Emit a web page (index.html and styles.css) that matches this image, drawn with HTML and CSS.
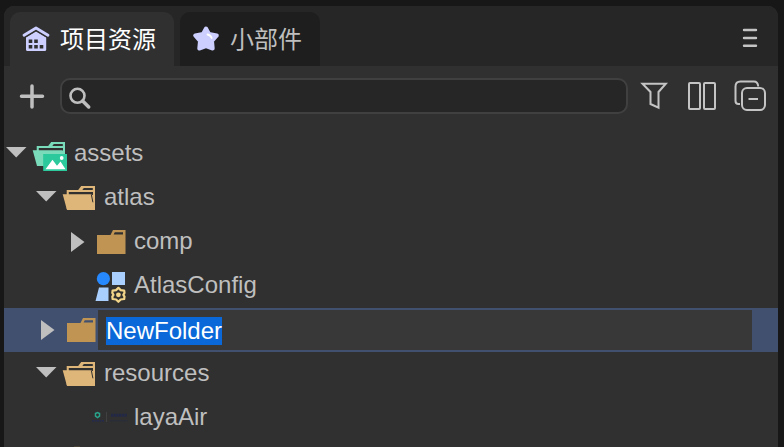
FILE: index.html
```html
<!DOCTYPE html>
<html lang="zh-CN">
<head>
<meta charset="utf-8">
<title>项目资源</title>
<link rel="stylesheet" href="styles.css">
</head>
<body>
<svg class="defs" width="0" height="0">
  <symbol id="arrow-open" viewBox="0 0 26 44"><path d="M2 15h20.500L12.200 25.500z" fill="#bfbfbf"/></symbol>
  <symbol id="arrow-closed" viewBox="0 0 26 44"><path d="M7 12l13.500 10L7 32z" fill="#bfbfbf"/></symbol>
  <symbol id="folder-closed" viewBox="0 0 44 44"><path fill="#c09553" fill-rule="evenodd" d="M7 15h13.500l2.500-5h12.500v24H7zM24.800 12.300l-1.200 2.300h9.400v-2.300z"/></symbol>
  <symbol id="folder-open" viewBox="0 0 44 44">
    <path fill="#dfb67a" fill-rule="evenodd" d="M6.700 14h11.500l3-4H35v23H6.700zM23.800 12l-1.500 2h10.500V12zM8.800 16v3h24.200v-3z"/>
    <path fill="#dfb67a" d="M2.700 18.300h29.300L35 30v4H7z"/>
    <path fill="none" stroke="#303030" stroke-width="1" d="M31.300 18.300l1.600 8"/>
  </symbol>
</svg>
<main class="panel">
  <nav class="tabs">
    <div class="tab tab-active">
      <svg class="tab-icon" viewBox="0 0 30 30">
        <path d="M3 12.300L15 5l12 7.300" fill="none" stroke="#cccfff" stroke-width="2.800" stroke-linecap="round" stroke-linejoin="round"/>
        <path d="M5 14.500l10-6 10.200 6V26.500q0 1.500-1.500 1.500H6.500Q5 28 5 26.500z" fill="#cccfff"/>
        <path d="M4.500 14.100L15 7.700l10.500 6.400" fill="none" stroke="#303030" stroke-width=".8"/>
        <path d="M7.700 16.500h3.600v3.500h-3.600zM13.200 16.500h3.600v3.500h-3.600zM7.700 22h3.600v3.500h-3.600zM13.200 22h3.600v3.500h-3.600zM18.700 22h3.600v3.500h-3.600z" fill="#303030"/>
      </svg>
      <span>项目资源</span>
    </div>
    <div class="tab">
      <svg class="tab-icon" viewBox="0 0 30 30">
        <path d="M15 5.500l3 5.500 7.800 1.500-4.800 5.500.7 7.500-6.700-2.300-6.700 2.300.7-7.500-4.800-5.500 7.800-1.500z" fill="#cccfff" stroke="#cccfff" stroke-width="4" stroke-linejoin="round"/>
        <path d="M16.500 11.500q3 .5 4.200 3.500" fill="none" stroke="#fff" stroke-width="1.800" stroke-linecap="round"/>
      </svg>
      <span>小部件</span>
    </div>
    <svg class="menu" viewBox="0 0 20 24"><path d="M4 4h12M4 12h12M4 19.800h12" stroke="#c4c4c4" stroke-width="2.400" stroke-linecap="round"/></svg>
  </nav>
  <div class="toolbar">
    <svg class="add" viewBox="0 0 32 36"><path d="M16 8v21M5.500 18.300h21" stroke="#bfbfbf" stroke-width="3.500" stroke-linecap="round"/></svg>
    <div class="search">
      <svg width="30" height="32" viewBox="0 0 30 32"><circle cx="15.500" cy="15.800" r="7" fill="none" stroke="#bfbfbf" stroke-width="2.600"/><path d="M20.700 21l6 6" stroke="#bfbfbf" stroke-width="3.500" stroke-linecap="round"/></svg>
    </div>
    <svg class="tools" viewBox="0 0 140 36" fill="none" stroke="#c4c4c4" stroke-width="2">
      <path d="M14.500 5.700h23.300L30.500 14v15.700l-8-3.700V14z"/>
      <rect x="61" y="5" width="11" height="26" rx="1"/><rect x="76" y="5" width="11" height="26" rx="1"/>
      <path d="M112 26h-1.500q-3 0-3-3V8.500q0-5 5-5H126q3.700 0 4.300 5"/>
      <rect x="114" y="10" width="23" height="22" rx="5"/><path d="M120.500 21h9.500"/>
    </svg>
  </div>
  <section class="tree">
    <div class="row">
      <svg class="arrow"><use href="#arrow-open"/></svg>
      <svg class="icon" viewBox="0 0 44 44">
        <path fill="#7adbba" fill-rule="evenodd" d="M6.700 14h11.500l3-4H35v18H6.700zM23.800 12l-1.500 2h10.500V12zM8.800 16v3h24.200v-3z"/>
        <path fill="#7adbba" d="M2.700 18.300h30V34H7z"/>
        <path fill="#2bc99b" d="M13.200 22H37v17H13.200z"/>
        <path fill="#fff" d="M15.500 37.200l7-9.500 4.500 6 3.500-4.200 5 7.700z"/><circle cx="31.700" cy="26" r="1.900" fill="#fff"/>
      </svg>
      <span>assets</span>
    </div>
    <div class="row level-1">
      <svg class="arrow"><use href="#arrow-open"/></svg><svg class="icon"><use href="#folder-open"/></svg><span>atlas</span>
    </div>
    <div class="row level-2">
      <svg class="arrow"><use href="#arrow-closed"/></svg><svg class="icon"><use href="#folder-closed"/></svg><span>comp</span>
    </div>
    <div class="row level-2">
      <svg class="arrow"></svg>
      <svg class="icon" viewBox="0 0 44 44">
        <circle cx="13.400" cy="14.700" r="6.600" fill="#2689ff"/>
        <path fill="#a9cfff" d="M22 8h13v13H22zM9 23.500h9.500V37H5.500z"/>
        <path d="M28.400 23.800l2.300 2.300 3.500.5.300 2.300-1.200 1.900 1.200 1.900-.3 2.300-3.500.5-2.300 2.300-2.300-2.300-3.500-.5-.3-2.300 1.200-1.900-1.200-1.900.3-2.300 3.500-.5z" fill="#303030" stroke="#f3d58a" stroke-width="2.200" stroke-linejoin="round"/>
        <circle cx="28.400" cy="30.800" r="2.400" fill="#f3d58a"/>
      </svg>
      <span>AtlasConfig</span>
    </div>
    <div class="row level-1 selected">
      <svg class="arrow"><use href="#arrow-closed"/></svg><svg class="icon"><use href="#folder-closed"/></svg>
      <div class="rename"><span class="highlight">NewFolder</span></div>
    </div>
    <div class="row level-1">
      <svg class="arrow"><use href="#arrow-open"/></svg><svg class="icon"><use href="#folder-open"/></svg><span>resources</span>
    </div>
    <div class="row level-2">
      <svg class="arrow"></svg>
      <svg class="icon" viewBox="0 0 44 44">
        <path d="M5.500 17.500l2-1 2 1v2.500l-2 1.500-2-1.500z" fill="none" stroke="#29a38a" stroke-width="1.500"/>
        <path d="M2 24.800h12" stroke="#252b49" stroke-width="1.800" stroke-dasharray="2 .5"/>
        <path d="M16.500 16v10" stroke="#404040"/>
        <path d="M21 19.300h16" stroke="#222946" stroke-width="3" stroke-dasharray="2.200 .5"/>
        <path d="M20 24.800h18" stroke="#292d3b" stroke-width="1.200"/>
      </svg>
      <span>layaAir</span>
    </div>
    <div class="row level-1">
      <svg class="arrow"></svg><svg class="icon" viewBox="0 0 44 44"><path d="M14 6h6v2h-6z" fill="#484236"/></svg>
    </div>
  </section>
</main>
</body>
</html>
```
FILE: styles.css
```css
* { box-sizing: border-box; }
body {
  margin: 0;
  height: 447px;
  padding: 6px 6px 0 4px;
  overflow: hidden;
  background: #171717;
  color: #bfbfbf;
  font-family: "Liberation Sans", "Noto Sans CJK SC", sans-serif;
  font-size: 24px;
}
svg { flex: none; display: block; }
.defs { position: absolute; }
.panel {
  height: 441px;
  overflow: hidden;
  background: #303030;
  border-radius: 10px 10px 0 0;
}
.tabs {
  display: flex;
  gap: 6px;
  height: 60px;
  padding: 6px 18px 0 6px;
  background: #262626;
}
.tab {
  display: flex;
  align-items: center;
  gap: 9px;
  width: 140px;
  padding: 0 0 3px 11px;
  background: #1e1e1e;
  border-radius: 10px 10px 0 0;
  white-space: nowrap;
}
.tab-active { width: 164px; background: #303030; color: #fff; }
.tab-icon { width: 30px; height: 30px; }
.menu { width: 20px; height: 24px; margin: 14px 0 0 auto; }
.toolbar {
  display: flex;
  height: 60px;
  padding: 12px 8px 0 12px;
}
.add { width: 32px; height: 36px; margin-right: 12px; }
.search {
  width: 568px;
  height: 36px;
  background: #262626;
  border: 2px solid #404040;
  border-radius: 10px;
}
.tools { width: 140px; height: 36px; }
.tree { padding-top: 6px; }
.row {
  display: flex;
  height: 44px;
  line-height: 42px;
}
.level-1 { padding-left: 30px; }
.level-2 { padding-left: 60px; }
.arrow { width: 26px; height: 44px; }
.icon { width: 44px; height: 44px; }
.selected { background: #425070; }
.rename {
  display: flex;
  align-items: center;
  width: 654px;
  height: 40px;
  margin: 2px 0 0 -6px;
  padding: 2px 0 0 8px;
  background: #383838;
  color: #fff;
}
.highlight { height: 28px; line-height: 28px; background: #0a68d8; }
```
